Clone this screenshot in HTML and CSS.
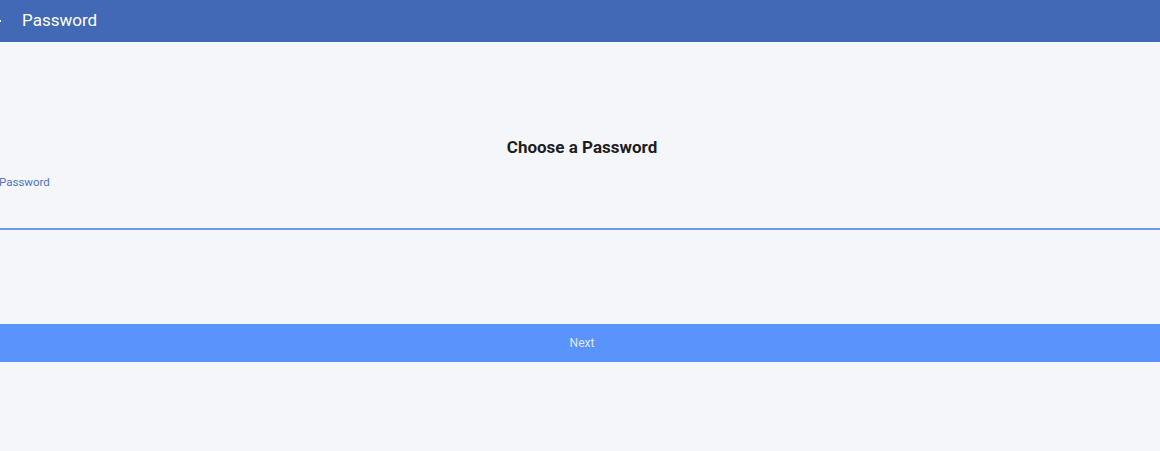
FILE: index.html
```html
<!DOCTYPE html>
<html lang="en">
<head>
    <meta charset="UTF-8">
    <meta name="viewport" content="width=device-width, initial-scale=1.0">
    <title>Password</title>
    <link rel="stylesheet" href="styles.css">
</head>
<body>
    <div class="page">
        <header class="toolbar">
            <button class="back" aria-label="Back">
                <svg viewBox="0 0 24 24" width="24" height="24"><path d="M20 11H7.83l5.59-5.59L12 4l-8 8 8 8 1.41-1.41L7.83 13H20v-2z"/></svg>
            </button>
            <h1>Password</h1>
        </header>

        <main class="content">
            <h2>Choose a Password</h2>
            <div class="field">
                <label for="password">Password</label>
                <input type="password" id="password" name="password">
            </div>
            <button class="btn">Next</button>
        </main>
    </div>
</body>
</html>
```

FILE: styles.css
```css
* {
    box-sizing: border-box;
    margin: 0;
    padding: 0;
    font-family: Roboto, 'Noto Sans', sans-serif;
}

html, body {
    height: 100%;
    overflow: hidden;
}

body {
    background-color: #f5f6fa;
    color: #222;
}

.page {
    margin: 0 -6px 0 -2px;
}

.toolbar {
    height: 42px;
    background-color: #4169b5;
    display: flex;
    align-items: center;
    color: #fff;
}

.back {
    width: 24px;
    height: 24px;
    margin-left: -17px;
    margin-right: 17px;
    border: none;
    background: none;
    display: flex;
}

.back svg {
    fill: #fff;
}

.toolbar h1 {
    font-size: 17px;
    font-weight: 400;
    margin-top: -2px;
}

.content {
    padding-top: 95px;
    display: flex;
    flex-direction: column;
}

.content h2 {
    text-align: center;
    font-size: 17px;
    font-weight: 700;
    color: #1d1e22;
    height: 20px;
}

.field {
    margin-top: 18px;
}

.field label {
    display: block;
    font-size: 11.5px;
    color: #4b74c3;
    padding-left: 1px;
}

.field input {
    display: block;
    width: 100%;
    height: 41px;
    border: none;
    border-bottom: 2px solid #6b97ec;
    background: transparent;
    outline: none;
    font-size: 14px;
}

.btn {
    margin-top: 94px;
    height: 38px;
    border: none;
    background-color: #5b93fc;
    color: #dde8ff;
    font-size: 12px;
    cursor: pointer;
}
```
